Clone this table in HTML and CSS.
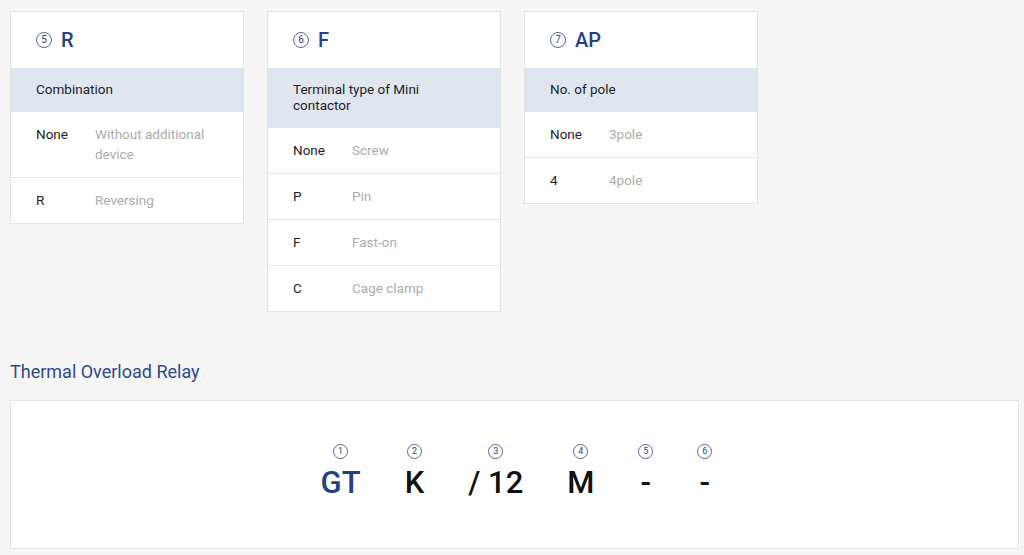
FILE: index.html
```html
<!DOCTYPE html>
<html lang="en">
<head>
<meta charset="utf-8">
<title>Code</title>
<link rel="stylesheet" href="styles.css">
</head>
<body>
<div class="cards">
  <div class="card">
    <div class="card-head"><span class="num">5</span><span class="card-title">R</span></div>
    <div class="card-sub">Combination</div>
    <div class="row"><span class="code">None</span><span class="desc">Without additional device</span></div>
    <div class="row"><span class="code">R</span><span class="desc">Reversing</span></div>
  </div>
  <div class="card">
    <div class="card-head"><span class="num">6</span><span class="card-title">F</span></div>
    <div class="card-sub">Terminal type of Mini contactor</div>
    <div class="row"><span class="code">None</span><span class="desc">Screw</span></div>
    <div class="row"><span class="code">P</span><span class="desc">Pin</span></div>
    <div class="row"><span class="code">F</span><span class="desc">Fast-on</span></div>
    <div class="row"><span class="code">C</span><span class="desc">Cage clamp</span></div>
  </div>
  <div class="card">
    <div class="card-head"><span class="num">7</span><span class="card-title">AP</span></div>
    <div class="card-sub">No. of pole</div>
    <div class="row"><span class="code">None</span><span class="desc">3pole</span></div>
    <div class="row"><span class="code">4</span><span class="desc">4pole</span></div>
  </div>
</div>

<h2 class="section-title">Thermal Overload Relay</h2>
<div class="code-box">
  <div class="part"><span class="num small">1</span><span class="part-text primary">GT</span></div>
  <div class="part"><span class="num small">2</span><span class="part-text">K</span></div>
  <div class="part"><span class="num small">3</span><span class="part-text">/ 12</span></div>
  <div class="part"><span class="num small">4</span><span class="part-text">M</span></div>
  <div class="part"><span class="num small">5</span><span class="part-text">-</span></div>
  <div class="part"><span class="num small">6</span><span class="part-text">-</span></div>
</div>
</body>
</html>
```
FILE: styles.css
```css
* { box-sizing: border-box; }
html, body { margin: 0; padding: 0; }
body {
  background: #f5f5f5;
  font-family: Roboto, "Liberation Sans", sans-serif;
  color: #222;
  padding: 11px 10px 0 10px;
  width: 1024px;
  height: 555px;
  overflow: hidden;
}
.cards {
  display: flex;
  gap: 23px;
  align-items: flex-start;
}
.card {
  width: 234px;
  background: #fff;
  border: 1px solid #e3e3e3;
}
.card-head {
  height: 56px;
  display: flex;
  align-items: center;
  padding: 0 25px;
  gap: 9px;
}
.num {
  width: 16px;
  height: 16px;
  border: 1px solid #55689a;
  border-radius: 50%;
  display: inline-flex;
  align-items: center;
  justify-content: center;
  font-size: 10px;
  line-height: 1;
  color: #2c3f78;
}
.card-title {
  font-size: 20px;
  font-weight: 500;
  color: #273f84;
  line-height: 24px;
}
.card-sub {
  background: #dfe6ef;
  font-size: 13.5px;
  line-height: 16px;
  padding: 13px 25px 14px 25px;
  color: #1e1e1e;
}
.row {
  display: flex;
  border-top: 1px solid #e3e3e3;
  padding: 12px 25px 13px 25px;
  font-size: 13.5px;
  line-height: 20px;
}
.row:first-of-type { }
.code {
  width: 59px;
  flex: none;
  color: #1e1e1e;
}
.desc {
  color: #ababab;
  padding-right: 10px;
}
.section-title {
  margin: 48px 0 16px 0;
  font-size: 18px;
  font-weight: 400;
  line-height: 24px;
  color: #2e4a8a;
}
.code-box {
  width: 1009px;
  height: 149px;
  background: #fff;
  border: 1px solid #e3e3e3;
  display: flex;
  justify-content: center;
  align-items: flex-start;
  gap: 44px;
  padding-top: 43px;
  padding-left: 4px;
}
.part {
  display: flex;
  flex-direction: column;
  align-items: center;
  gap: 5px;
}
.num.small {
  width: 15px;
  height: 15px;
  font-size: 9px;
}
.part-text {
  font-size: 31px;
  font-weight: 500;
  line-height: 38px;
  color: #111;
}
.part-text.primary {
  color: #263f83;
}
```
